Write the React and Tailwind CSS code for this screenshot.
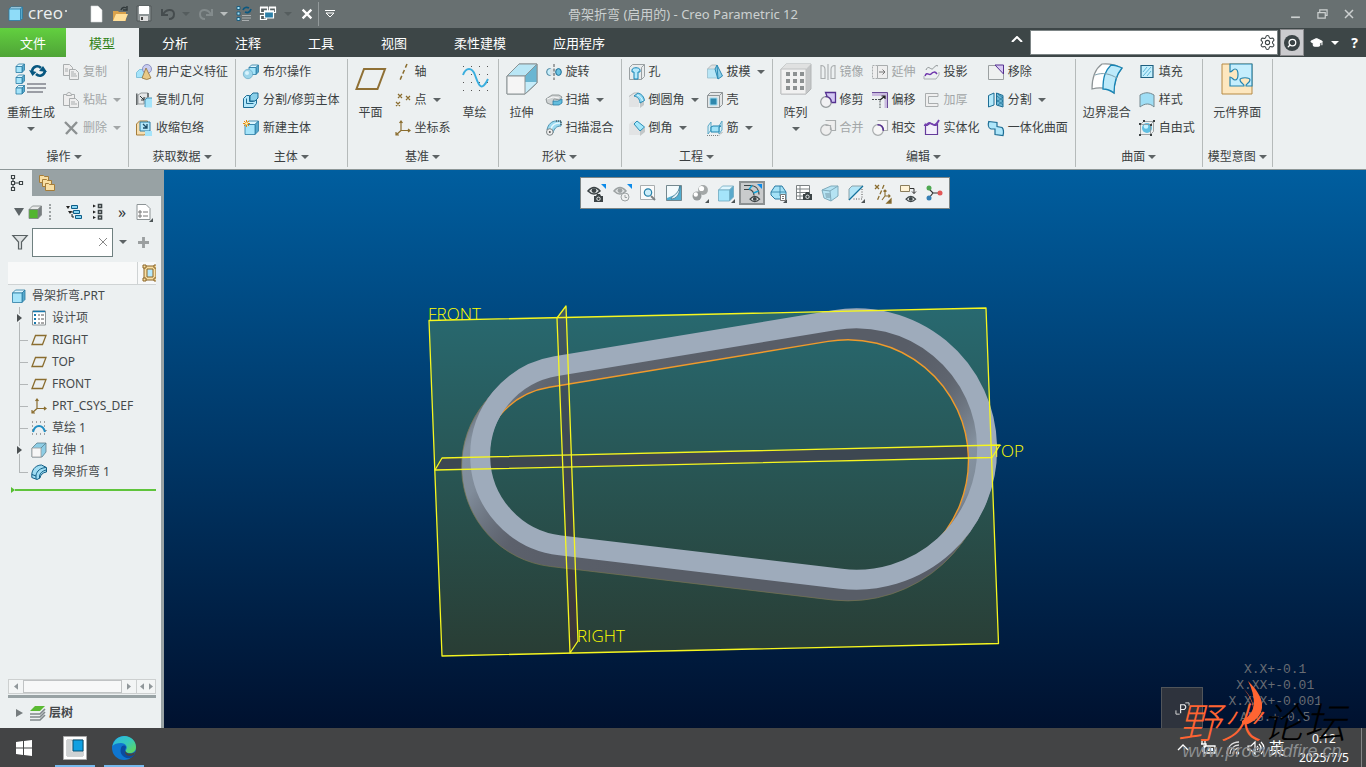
import { Settings, GraduationCap, Search } from 'lucide-react';

const Cube = ({ x = 0, y = 0, s = 11, d = 4, front = '#a5e4fa', top = '#dff6fe', side = '#58a9cc', line = '#2a7ba3' }) => (
  <g stroke={line} strokeWidth="0.8" strokeLinejoin="round">
    <path d={`M${x} ${y + d}l${d} ${-d}h${s}l${-d} ${d}z`} fill={top} />
    <path d={`M${x + s} ${y + d}l${d} ${-d}v${s}l${-d} ${d}z`} fill={side} />
    <path d={`M${x} ${y + d}h${s}v${s}h${-s}z`} fill={front} />
  </g>
);

const Eye = ({ x = 0, y = 0, c = '#3c4446', k = 1 }) => (
  <g transform={`translate(${x} ${y}) scale(${k})`}>
    <path d="M0 4Q6-3 12 4Q6 10 0 4z" fill="#dfe3e4" stroke={c} strokeWidth="1.5" />
    <circle cx="6" cy="3.6" r="2.4" fill={c} />
  </g>
);

const Camera = ({ x = 0, y = 0 }) => (
  <g transform={`translate(${x} ${y})`}>
    <path d="M0 2h2l1-2h3l1 2h2v6H0z" fill="#3c4446" />
    <circle cx="4.5" cy="4.8" r="1.7" fill="none" stroke="#eef2f3" strokeWidth="0.9" />
  </g>
);

const Corner = () => <path d="M17 14v4h-4z" fill="#4d5557" />;
const BlueCorner = () => <path d="M13 -1h5v5z" fill="#0c8bea" />;

// Every drawing lives in a 16 x 16 box unless noted in LARGE
const ICONS = {
  copy: <g fill="#eee" stroke="#a9adae"><path d="M.5 .5h6l3 3v8h-9z" /><path d="M6.500 5.500h6l3 3v7h-9z" /><path d="M2 5h3M2 7h3M8 10h5M8 12h6M8 8h3" /></g>,
  paste: <g fill="#eee" stroke="#a9adae"><path d="M.5 2.500h11v11H.5z" /><path d="M3.500 3.500c0-4 5-4 5 0z" /><path d="M6.500 6.500h6l3 3v6h-9z" /><path d="M8 10h4M8 12h6" /></g>,
  remove: <path d="M2 2l12 12M14 2L3 14" stroke="#8c9192" strokeWidth="2.400" />,
  udf: <g><path d="M.5 8.500l3-3h7v8h-10z" fill="#a5e4fa" stroke="#6fb6d4" strokeWidth=".8" /><circle cx="11" cy="5" r="4.500" fill="#c9cdf0" stroke="#7a80b8" strokeWidth=".8" /><path d="M10 4l5 10q-4 3-9 0z" fill="#e8c987" stroke="#84632b" strokeWidth=".7" /></g>,
  copygeom: <g><path d="M2 12V3l3-2h7v5H8v6z" fill="#e5e7e8" stroke="#969b9d" /><path d="M.8 1.500V13M12 1v4" stroke="#4b5153" strokeWidth="1.300" /><path d="M9 8l2-2h5v9.500H9z" fill="#a5e4fa" /><path d="M9 15V8l2-2h5" stroke="#2a7ba3" strokeWidth=".8" /><path d="M4 4l4 4M8 5v3H5" stroke="#303638" fill="none" /></g>,
  shrink: <g><path d="M.5 4l3-3h8v10l-3 4h-8z" fill="#f6deb0" stroke="#a57d39" /><path d="M4 2h10v9H4z" fill="#b5e8fb" stroke="#2a7ba3" /><path d="M9 11h7v5H9z" fill="#a5e4fa" /><path d="M7 4l4 4M11 4v4H7" stroke="#1c4e69" fill="none" strokeWidth="1.300" /></g>,
  boolean: <g><Cube x={6} y={1} s={7} d={2.500} /><circle cx="5" cy="10" r="4.700" fill="#9dd5ea" stroke="#64a8c4" strokeWidth=".7" /><circle cx="4" cy="9" r="2" fill="#d8f3fc" /></g>,
  splitbody: <g fill="#b5e8fb" stroke="#1d6d94"><path d="M.5 6.500l3-3h3v6h4l3-2v4l-3 4h-10z" /><path d="M7 4l3-3h5v5l-3 3H7z" fill="#8ad0ea" /><path d="M3.500 6.500v5h7" fill="none" /></g>,
  newbody: <g><Cube x={2} y={1} s={10} d={3.500} /><path d="M3.500 0v7M0 3.500h7M1 1l5 5M6 1L1 6" stroke="#f18a00" /><circle cx="3.500" cy="3.500" r="1.300" fill="#fff3b0" /></g>,
  axis: <path d="M12 0L5 16" stroke="#8a6d2f" strokeWidth="1.500" strokeDasharray="4 2.500" />,
  point: <path d="M3 2l4 4M7 2L3 6M11 4l4 4M15 4l-4 4M1 10l4 4M5 10l-4 4" stroke="#8a6d2f" strokeWidth="1.200" />,
  csys: <g stroke="#8a6d2f" fill="none" strokeWidth="1.200"><path d="M6 1v9.500h9M6 10.500L1 15M4.500 3L6 1l1.500 2M13 9l2 1.500L13 12M1 12v3h3" /></g>,
  revolve: <g><ellipse cx="3.500" cy="8" rx="2.800" ry="3.400" fill="#c8eefb" stroke="#437f9b" /><path d="M4 5h8v6H4z" fill="#dbe2e5" /><ellipse cx="12.500" cy="8" rx="2.800" ry="3.400" fill="#6cc3e2" stroke="#1d6d94" /><path d="M8 0v16" stroke="#555" strokeDasharray="3 1.500" /></g>,
  sweep: <g stroke="#7d8587" strokeWidth=".8"><path d="M0 7l6-4h7l3 2-2 3-6-1-1 2 2 2-3 2-5-2z" fill="#cfd3d4" /><path d="M1 7l6-2 6 1" fill="none" stroke="#fff" /><path d="M7 9h5l4-2v4l-3 2H7z" fill="#63bddd" stroke="#2a7ba3" /></g>,
  sweptblend: <g><path d="M1 10C2 4 6 1 10 1h5v5c-5 0-7 3-8 7z" fill="#9bdaf0" stroke="#4c92b0" /><path d="M5 9C6 5 9 3 14 3" stroke="#e8f8fe" strokeWidth="1.500" fill="none" /><circle cx="3.800" cy="12" r="3.300" fill="#eee" stroke="#7d8587" /><circle cx="3.800" cy="12" r="1" fill="#555" /><path d="M10 1h5v5" stroke="#333" fill="none" strokeDasharray="1 1" /></g>,
  hole: <g><path d="M.5 3.500l3-3h12v12l-3 3H.5z" fill="#e9eced" stroke="#9aa0a2" /><path d="M12.500 3.500v12M12.500 3.500l3-3" stroke="#9aa0a2" /><path d="M3 6c0-3 8-3 8 0v2H9v7H5V8H3z" fill="#b5e8fb" stroke="#1383b5" /></g>,
  round: <g><path d="M0 5L5 1l5 3v11H0z" fill="#e1e3e4" /><path d="M11 10l4-2v5l-4 3z" fill="#c3c7c8" /><path d="M0 4.500L5 1h4" stroke="#b3b8ba" /><path d="M5 4l4-3c4 1 6 4 6.500 7.500L11 11C10.500 7 9 5 5 4z" fill="#8ed8f2" stroke="#1d82ae" strokeWidth=".9" /><path d="M8 3c3 1 5 3 5.500 6" stroke="#e0f7ff" fill="none" /></g>,
  chamfer: <g><path d="M0 4L4 1h4l3 9v5H0z" fill="#e1e3e4" /><path d="M11 11l5-4v5l-5 4z" fill="#c3c7c8" /><path d="M5 4l3-3 7.500 6L11 11z" fill="#a5e8fb" stroke="#1d82ae" strokeWidth=".9" /></g>,
  draft: <g><path d="M.5 5l4-4h5v4" fill="#dfe3e4" stroke="#a0a6a8" strokeWidth=".7" /><path d="M.5 5h8l2 9H.5z" fill="#b9e6f6" stroke="#8fb9c8" strokeWidth=".7" /><path d="M8 5l2-4 5.500 11-4.500 3z" fill="#8ccfe8" stroke="#2c8bb5" /><path d="M10 1l1 14" stroke="#2c8bb5" /></g>,
  shell: <g><path d="M.5 3.500l3-3h12v12l-3 3H.5z" fill="#e3e6e7" stroke="#909698" /><path d="M.5 3.500h12v12M12.500 3.500l3-3" stroke="#909698" fill="none" /><path d="M3 6h7v7H3z" fill="#2f88ad" stroke="#9edaf0" /></g>,
  rib: <g><path d="M1 6l3-4v8l-3 4zM12 6l3-5v9l-3 4z" fill="#d7eef7" stroke="#5fa9c6" /><path d="M4 7l2-1h8l-2 1v5H4z" fill="#9fe2f8" stroke="#1d82ae" /><path d="M0 15.500h12l4-4" stroke="#7b8183" strokeDasharray="1 1" fill="none" /></g>,
  mirror: <g fill="none" stroke="#a9adae" strokeWidth="1.100"><path d="M1 1.500c3 0 4 2 4 4v9H1zM15 1.500c-3 0-4 2-4 4v9h4z" /><path d="M8 0v16" /></g>,
  extend: <g fill="#eee" stroke="#a9adae"><path d="M.5 1.500h5v13h-5z" strokeDasharray="2 1" /><path d="M5.500 1.500h10v13h-10z" /><path d="M7 8h6M10.500 5.500L13 8l-2.500 2.500" stroke="#777" /></g>,
  project: <g fill="none" stroke="#8b9193"><path d="M2 6c2-5 4-1 6-1s3-5 6-3" /><path d="M0 12v3h12l3-4v-3" stroke="#aab0b2" /><path d="M1 12c2-5 4 0 6-2s4-3 6 0" stroke="#6f36ac" strokeWidth="1.500" /></g>,
  erase: <g><path d="M.5 1.500h15v14H.5z" fill="#eef0f0" stroke="#9ba0a1" /><path d="M7 1h8.500v9z" fill="#d7c9f3" stroke="#543090" /></g>,
  trim: <g><path d="M5.500 .5h10v10h-6z" fill="#d2c6f3" stroke="#543090" strokeWidth="1.300" /><circle cx="6" cy="10" r="5.300" fill="#f1f1f3" stroke="#969b9d" strokeWidth="1.200" /><path d="M11.300 10.500a5.300 5.300 0 0 0-5.800-5.800" stroke="#543090" fill="none" strokeWidth="1.300" /></g>,
  offset: <g><path d="M0 2.500h14V16" fill="none" stroke="#c9badf" strokeWidth="3" /><path d="M0 .5h15.500V16" fill="none" stroke="#6a4c98" /><path d="M0 7.500h8V16" fill="none" stroke="#4b5153" strokeDasharray="2 1" /><path d="M8 8l5-4M9.500 4H13v3" stroke="#222" fill="none" strokeWidth="1.200" /></g>,
  thicken: <path d="M14 1.500H1.500v13H14v-3H4.500v-7H14z" fill="#efefef" stroke="#a9adae" />,
  split: <g stroke="#1d6d94"><path d="M.5 3.500L6 1v12l-5.500 2z" fill="#b5eafc" /><path d="M8.500 1L15 3.500V15l-6.500-2z" fill="#6fb9d6" /><path d="M9 4l6 5M9 8l6 5M10 2l5 4M15 5L9 10M15 9l-5 4" strokeWidth=".7" /></g>,
  merge: <g fill="#eee" stroke="#a9adae" strokeWidth="1.200"><path d="M5.500 .5h10v10h-5" /><circle cx="6" cy="10" r="5.300" /><path d="M5.500 5.500h5V10" /></g>,
  intersect: <g fill="#f6f6f6" stroke="#a9adae" strokeWidth="1.200"><path d="M5.500 .5h10v10h-6" /><circle cx="6" cy="10" r="5.300" /><path d="M5.500 4.700c4 0 5.800 2 5.800 6" stroke="#543090" fill="none" strokeWidth="1.600" /></g>,
  solidify: <g><path d="M1.500 14.500v-10c2 3 3-2 6-1s4 4 6 0v11z" fill="#f2eefb" stroke="#643b9b" strokeWidth="1.200" /><path d="M0 5c3 1 4-3 6-2s5 5 9-3" fill="none" stroke="#7440b0" strokeWidth="1.800" /></g>,
  unify: <path d="M.8 1.500l8.200 1v4l5 1c2 2 2 4 1 8l-8-1V9H3C0 8 0 4 .8 1.500z" fill="#aee6fa" stroke="#1d6d94" strokeWidth="1.200" />,
  fill: <g><path d="M2 1.500h12v12H2z" fill="#c4effd" stroke="#1d5f80" strokeWidth="1.200" /><path d="M4 8l4-5M4 12l8-9M8 12l4-5" stroke="#5eb6d8" /></g>,
  style: <path d="M1 3c5-3 9-3 14 0v12c-4-4-9-4-14 0z" fill="#9fdef5" stroke="#75888f" />,
  freestyle: <g><circle cx="8" cy="8" r="5" fill="#5fbfe2" /><circle cx="7" cy="6.500" r="2.300" fill="#c8f2ff" /><path d="M1.500 4.500l3-3h10v10l-3 3h-10zM1.500 4.500h10v10M11.500 4.500l3-3" fill="none" stroke="#8b9193" strokeWidth=".8" /><path d="M0 3h2v2H0zM11 4h2v2h-2zM0 14h2v2H0zM14 0h2v2h-2zM4 0h2v2H4zM11 14h2v2h-2z" fill="#3b4143" /></g>,

  newfile: <path d="M3 0h7l4 4v12H3z" fill="#fff" stroke="#d5d8d8" strokeWidth=".6" />,
  open: <g><path d="M1 5h5l1 1h7v9H1z" fill="#d9a14b" /><path d="M4 8h12l-3 7H1z" fill="#ffdf9a" /><path d="M9 4c1-3 4-3 5-2M15 0v4h-4" stroke="#30383a" fill="none" strokeWidth="1.400" /></g>,
  save: <g><path d="M1 0h14v15H1z" fill="#8e9596" stroke="#505759" /><path d="M3 0h10v8H3z" fill="#fff" /><path d="M4 10h8v5H4z" fill="#ddd" /><path d="M5 11h2v3H5z" fill="#444" /></g>,
  undo: <path d="M2 3v6h6M3 9c2-6 11-7 11-1 0 4-3 5-5 5" fill="none" stroke="#454c4e" strokeWidth="2" />,
  redo: <path d="M14 3v6H8M13 9C11 3 2 2 2 8c0 4 3 5 5 5" fill="none" stroke="#838b8c" strokeWidth="2" />,
  regensmall: <g><path d="M1 .5h3v3H1zM1 6h3v3H1zM1 11.500h3v3H1z" fill="#a5e4fa" stroke="#1d5f80" /><path d="M6 9.500h9M6 12h9M6 14.500h7" stroke="#a9aeaf" /><path d="M7 4c1-3 4-3 6-2M15 3c-1 4-4 4-6 3" stroke="#0b5880" fill="none" strokeWidth="1.700" /></g>,
  windows: <g fill="#566062" stroke="#fff" strokeWidth="1.200"><path d="M.5 1.500h7v5h-7zM9.500 1.500h6v5h-6zM.5 9.500h6v4h-6z" /><path d="M0 1.500h8M9 1.500h7" strokeWidth="2" /><path d="M4.500 5h9v7h-9z" fill="#2d7fa6" /><path d="M4 5.500h10" strokeWidth="2" /></g>,
  close: <path d="M3 3l10 10M13 3L3 13" stroke="#fff" strokeWidth="2.600" />,

  modeltree: <g fill="#fff" stroke="#3c4446" strokeWidth="1.200"><path d="M4 8h8M4 3v11" /><path d="M2.500 .5h3v3h-3zM2.500 6.500h3v3h-3zM2.500 12.500h3v3h-3zM10.500 6.500h3v3h-3z" /></g>,
  folders: <g fill="#f8dfa4" stroke="#a57d39"><path d="M.5 .5h4l1 1h4v6h-9z" /><path d="M3.500 4.500h4l1 1h4v6h-9z" /><path d="M6.500 8.500h3l1 1h5v6h-9z" /></g>,
  greencube: <Cube x={1} y={2} s={9} d={3.500} front="#52b52f" top="#e7e9e9" side="#767d7f" line="#7d8384" />,
  treelevels: <g fill="#8ad6f3" stroke="#0d5d88"><path d="M5.500 1.500h6v3h-6zM7.500 6.500h6v3h-6zM9.500 11.500h6v3h-6z" /><path d="M4 8h3M6 10v3h2" stroke="#222" /><path d="M0 2h4L2 5zM2 7h4L4 10z" fill="#222" stroke="none" /></g>,
  treelist: <g><path d="M6.500 .5h3v3h-3zM6.500 6.500h3v3h-3zM6.500 12h3v3h-3z" fill="none" stroke="#3c4446" strokeWidth="1.600" /><path d="M1 .5l3 1.500L1 3.500zM1 6.500L4 8 1 9.500zM1 12l3 1.500L1 15z" fill="#222" /></g>,
  doclist: <g><path d="M1 .5h9l4 4v11H1z" fill="#fff" stroke="#8d9496" /><path d="M3 7h2v2H3zM3 11h2v2H3z" fill="none" stroke="#777" /><path d="M7 8h5M7 12h5" stroke="#777" /><Corner /></g>,
  funnel: <path d="M.8 1.500h14.400L9.500 8v7h-3V8z" fill="#dde1e2" stroke="#596163" strokeWidth="1.200" />,
  frame: <g fill="#f8dfa4" stroke="#8a6526"><path d="M2 1h12v14H2z" /><path d="M5 4h6v8H5z" fill="#b5e8fb" /><path d="M1 0h3v3H1zM12 0h3v3h-3zM1 13h3v3H1zM12 13h3v3h-3z" /></g>,
  part: <Cube x={1.500} y={2} s={9.500} d={3} />,
  design: <g><path d="M1.500 1h13v14h-13z" fill="#fff" stroke="#8d9496" /><path d="M2 1.500h12" stroke="#1778ac" strokeWidth="1.500" /><path d="M3 4h2v2H3zM3 8h2v2H3zM3 12h2v2H3z" fill="#1778ac" /><path d="M7 5h2M10 5h3M7 9h2M10 9h3M7 13h2M10 13h3" stroke="#555" /></g>,
  plane: <path d="M4.500 3.500h10.500L11.500 12.500H1z" fill="none" stroke="#8a6d2f" strokeWidth="1.300" />,
  sketch: <g><path d="M2 12C4 4 12 4 14 12" fill="none" stroke="#1f8ec4" strokeWidth="2" /><path d="M1 2h14M1 6h2M13 6h2M1 10h1M15 10v1M1 14h14" stroke="#555" strokeDasharray="1 3" fill="none" /></g>,
  extrudesmall: <g strokeWidth=".8"><path d="M1 6l5-5h9v9l-4 5H1z" fill="#8dcde5" stroke="#5d7f8d" /><path d="M1 6h9v9H1z" fill="#f6f6f6" stroke="#999" /><path d="M10 6l5-5" stroke="#5d7f8d" /></g>,
  bend: <g fill="#9fdcf2" stroke="#135f86" strokeWidth="1"><path d="M.8 13.500V10C1.500 4 6 1 10.500 1l5 2.500V8c-4 .5-6 3-6.500 6l-3 1.500z" /><path d="M5 15v-4C6 7 9 4 15 3.500M1 10.500l4 1.500M8.500 14v-2c.5-3 3-5 6.500-6" fill="none" /></g>,
  layers: <g><path d="M6 1h10l-5 5H1z" fill="#5aba33" /><path d="M1 9h10l5-5M1 12h10l5-5M1 15h10l5-5" stroke="#80888a" strokeWidth="1.700" fill="none" /></g>,

  eyecam: <g><Eye y={2} /><Camera x={6} y={9} /><BlueCorner /></g>,
  eyeclock: <g><Eye y={2} c="#9ca2a3" /><circle cx="11" cy="12" r="4" fill="#eef0f0" stroke="#9ca2a3" /><path d="M11 10v2.500h2" stroke="#9ca2a3" fill="none" /><BlueCorner /></g>,
  refit: <g><path d="M.5 .5h14v14H.5z" fill="#fbfbfb" stroke="#a9aeb0" /><circle cx="8" cy="7.500" r="3.700" fill="#cdeefa" stroke="#2680a8" strokeWidth="1.200" /><path d="M11 11l4 4" stroke="#7b8183" strokeWidth="2" /></g>,
  repaint: <g><path d="M.5 .5h15v15H.5z" fill="#51add0" stroke="#74888f" /><path d="M1 1h12c0 5-3 9-7 10l-5 2z" fill="#f3fafc" /><path d="M14 1C13 7 9 10 6 12l-1 2c5 0 9-4 9-13z" fill="#dff1f8" stroke="#3d6f84" strokeWidth=".7" /></g>,
  shading: <g><circle cx="11" cy="5" r="4.900" fill="#a4a8a8" /><circle cx="9.500" cy="3.500" r="2.600" fill="#fff" /><circle cx="5" cy="11" r="4.500" fill="#969b9c" /><circle cx="3.800" cy="9.500" r="2.200" fill="#fff" /><Corner /></g>,
  viewcube: <g><Cube x={.5} y={1} s={11} d={4} line="#6fa9c0" /><Corner /></g>,
  bendview: <g><path d="M0 .5h6c6 0 9 4 9 9M0 4.500h5c3 0 5 3 5 6" fill="none" stroke="#3c4446" strokeWidth="1.200" /><path d="M8 .5L5 4.500M14.500 6l-5 2" stroke="#12a5d8" strokeWidth="1.400" /><Eye x={6} y={11} k={0.8} /><BlueCorner /></g>,
  saved: <g><path d="M1 7l4-6h7l4 6v7H5l-4-4z" fill="#a4e1f6" stroke="#2a7ba3" /><path d="M1 7h15M10 1v10" stroke="#2a7ba3" fill="none" strokeWidth=".8" /><path d="M10.500 9.500h5v6h-5z" fill="#fff" stroke="#777" /><path d="M12 11.500h2M12 13.500h2" stroke="#777" /><Corner /></g>,
  tablecam: <g><path d="M.5 .5h13v14H.5zM.5 4h13M.5 7.500h13M.5 11h13M4 .5v14" fill="#fff" stroke="#7b8183" /><Camera x={7} y={7} /></g>,
  perspective: <g fill="#b5e3f3" stroke="#7faabb"><path d="M0 5L9 1h7v10l-7 5-7-3z" /><path d="M0 5l8 1 8-5M8 6l1 10" fill="none" /><path d="M3 8h5v5H4z" fill="#93bccc" stroke="none" /></g>,
  section: <g><path d="M1 4l3-3h11L1 15z" fill="#b2e5f7" stroke="#8aa2ab" /><path d="M14 4v10H4" fill="none" stroke="#555" strokeDasharray="1 1.500" /><path d="M1 15L15 1" stroke="#12719d" strokeWidth="1.300" /><Corner /></g>,
  datums: <g stroke="#8a6d2f" strokeWidth="1.300" fill="none"><path d="M1 0l4 4M5 0L1 4" /><path d="M10 0L3 16" strokeDasharray="4 2" /><path d="M11 5v6h5M11 11l-3 4M9.500 6.500L11 5l1.500 1.500M14.500 9.500L16 11l-1.500 1.500" strokeWidth="1.100" /><Corner /></g>,
  annot: <g><path d="M.5 .5h9v6h-9z" fill="#fff3d6" stroke="#8a7d5c" /><path d="M10 3.500h4v5M12 6.500l2 2 2-2" stroke="#333" fill="none" /><Eye x={6} y={11} k={0.8} /></g>,
  spin: <g><path d="M2 3l5 5h7M7 8l-4 5" stroke="#333" strokeWidth="1.200" fill="none" /><circle cx="3" cy="3" r="2.500" fill="#4ea852" /><circle cx="14" cy="8" r="2.500" fill="#e25757" /><circle cx="3" cy="13" r="2.500" fill="#347fb5" /></g>,
};

// 32 x 32 drawings used by the tall ribbon buttons
const LARGE = {
  regen: <g><Cube x={1} y={1} s={6} d={2.500} /><Cube x={1} y={12} s={6} d={2.500} /><Cube x={1} y={22.500} s={6} d={2.500} /><path d="M12 21h19M12 25h19M12 29h16" stroke="#9b9ea5" strokeWidth="2" /><path d="M17 8c1-5 6-6 9-3M30 8c-1 5-6 6-9 3" fill="none" stroke="#075780" strokeWidth="2.600" /><path d="M14 7l3.500 6 4-4zM32 9l-4-6-4 5z" fill="#075780" /></g>,
  plane: <path d="M9 6h21L22.500 26H1.500z" fill="none" stroke="#8f7035" strokeWidth="2" />,
  sketch: <g><path d="M4 3.500h28M4 11.500h28M4 19.500h28M4 27.500h28" stroke="#555" strokeDasharray="1 7" /><path d="M4 12C7 4 13 4 16 12s6 19 13 4" fill="none" stroke="#3aaede" strokeWidth="1.900" /></g>,
  extrude: <g stroke="#8b9395"><path d="M1 13L13 1h18v19L19 31H1z" fill="#8bd0e8" /><path d="M13 1v17h17L19 31V13z" fill="#5faecb" stroke="none" /><path d="M1 13L13 1h18L19 13z" fill="#b9e6f5" /><path d="M19 31V19h12z" fill="#c6ecf9" stroke="none" /><path d="M19 13L31 1v18H19z" fill="#6ab6d2" stroke="none" /><path d="M19 13L31 1M19 31l12-11V1" fill="none" /><path d="M1 13h18v18H1z" fill="#f5f5f5" /></g>,
  pattern: <g><path d="M1 6l5-5h25v25l-5 5H1z" fill="#c4c6c7" stroke="#b3b6b7" /><path d="M1 6l5-5h25l-5 5z" fill="#e0e1e1" /><path d="M1 6h25v25H1z" fill="#f1f1f1" stroke="#c0c2c3" /><path d="M6 11h4M13 11h4M20 11h4M6 18h4M13 18h4M20 18h4M6 25h4M13 25h4M20 25h4" stroke="#8d9192" strokeWidth="4" /></g>,
  boundary: <g><path d="M1 26C1 14 4 6 11 1c8-1 14 1 20 4-5 6-8 13-8 25-6-5-14-6-22-4z" fill="#fff" stroke="#8d9496" strokeWidth="1.200" /><path d="M20 2c6 0 8 2 11 3-5 6-8 13-8 25-4-3-7-4-11-4 0-12 2-18 8-24z" fill="#bdeafa" stroke="#1685b6" strokeWidth="1.300" /><path d="M4 12c8-3 15-1 22 3" fill="none" stroke="#7da0ad" /></g>,
  component: <g><path d="M1 1h30v30H1z" fill="#fde7bf" stroke="#b68a44" /><path d="M9 1h22v22h-6c-1-2 4-3 4-6 0-3-10-3-10 0 0 3 5 4 4 6H9V14c2 0 3 3 5 3 4 0 4-11 0-11-2 0-3 3-5 3z" fill="#c5eefd" stroke="#2584af" strokeWidth="1.200" /></g>,
};

const Icon = ({ name, className = 'size-4' }) => (
  <svg viewBox="0 0 16 16" className={`${className} shrink-0 overflow-visible`} fill="none" aria-hidden="true">{ICONS[name]}</svg>
);

const LargeIcon = ({ name }) => (
  <svg viewBox="0 0 32 32" className="size-8 shrink-0" fill="none" aria-hidden="true">{LARGE[name]}</svg>
);

const Caret = ({ className = 'text-[#5d6365]' }) => (
  <svg viewBox="0 0 8 4" className={`h-1 w-2 shrink-0 ${className}`} aria-hidden="true"><path d="M0 0h8L4 4z" fill="currentColor" /></svg>
);

const QUICK_LEFT = ['newfile', 'open', 'save', 'undo'];
const TABS = ['模型', '分析', '注释', '工具', '视图', '柔性建模', '应用程序'];

// A column is either one tall button or up to three rows: [icon, label, flags] (c = caret, d = disabled)
const GROUPS = [
  { title: '操作', cols: [{ big: 'regen', label: '重新生成', caret: true }, [['copy', '复制', 'd'], ['paste', '粘贴', 'dc'], ['remove', '删除', 'dc']]] },
  { title: '获取数据', cols: [[['udf', '用户定义特征'], ['copygeom', '复制几何'], ['shrink', '收缩包络']]] },
  { title: '主体', cols: [[['boolean', '布尔操作'], ['splitbody', '分割/修剪主体'], ['newbody', '新建主体']]] },
  { title: '基准', cols: [{ big: 'plane', label: '平面' }, [['axis', '轴'], ['point', '点', 'c'], ['csys', '坐标系']], { big: 'sketch', label: '草绘' }] },
  { title: '形状', cols: [{ big: 'extrude', label: '拉伸' }, [['revolve', '旋转'], ['sweep', '扫描', 'c'], ['sweptblend', '扫描混合']]] },
  { title: '工程', cols: [[['hole', '孔'], ['round', '倒圆角', 'c'], ['chamfer', '倒角', 'c']], [['draft', '拔模', 'c'], ['shell', '壳'], ['rib', '筋', 'c']]] },
  { title: '编辑', cols: [
    { big: 'pattern', label: '阵列', caret: true },
    [['mirror', '镜像', 'd'], ['trim', '修剪'], ['merge', '合并', 'd']],
    [['extend', '延伸', 'd'], ['offset', '偏移'], ['intersect', '相交']],
    [['project', '投影'], ['thicken', '加厚', 'd'], ['solidify', '实体化']],
    [['erase', '移除'], ['split', '分割', 'c'], ['unify', '一体化曲面']],
  ] },
  { title: '曲面', cols: [{ big: 'boundary', label: '边界混合' }, [['fill', '填充'], ['style', '样式'], ['freestyle', '自由式']]] },
  { title: '模型意图', cols: [{ big: 'component', label: '元件界面' }] },
];

const TREE = [
  { icon: 'design', label: '设计项', open: true },
  { icon: 'plane', label: 'RIGHT' },
  { icon: 'plane', label: 'TOP' },
  { icon: 'plane', label: 'FRONT' },
  { icon: 'csys', label: 'PRT_CSYS_DEF' },
  { icon: 'sketch', label: '草绘 1' },
  { icon: 'extrudesmall', label: '拉伸 1', open: true },
  { icon: 'bend', label: '骨架折弯 1', last: true },
];

const VIEW_TOOLS = ['eyecam', 'eyeclock', 'refit', 'repaint', 'shading', 'viewcube', 'bendview', 'saved', 'tablecam', 'perspective', 'section', 'datums', 'annot', 'spin'];

function TitleBar() {
  return (
    <header className="grid h-7 shrink-0 grid-cols-[1fr_auto_1fr] items-center bg-[#687071] text-[#ccd0d0]">
      <div className="flex items-center">
        <svg viewBox="0 0 16 16" className="ml-2 size-4" aria-hidden="true"><Cube x={1} y={1} s={11.500} d={2} front="#8fdcf8" /></svg>
        <span className="ml-1 flex w-[46px] items-center font-['Open_Sans',sans-serif] text-[17px] leading-5 font-medium text-[#eef1f1]">
          <span className="-mt-0.5">creo</span>
          <span className="mb-1.5 ml-0.5 size-0.5 rounded-full bg-[#eef1f1]" />
        </span>
        <div className="ml-3.5 flex items-center gap-2">
          {QUICK_LEFT.map((n) => <button key={n} aria-label={n}><Icon name={n} /></button>)}
        </div>
        <Caret className="ml-1.5 text-[#555d5e]" />
        <button aria-label="redo" className="ml-2"><Icon name="redo" /></button>
        <Caret className="ml-1.5 text-[#b9bebe]" />
        <button aria-label="regenerate" className="ml-2"><Icon name="regensmall" /></button>
        <button aria-label="windows" className="ml-2"><Icon name="windows" /></button>
        <Caret className="ml-2 text-[#555d5e]" />
        <button aria-label="close window" className="ml-2"><Icon name="close" className="size-[14px]" /></button>
        <span className="ml-1 h-6 w-px bg-[#92999a]" />
        <svg viewBox="0 0 10 8" className="ml-1.5 h-2 w-2.5" aria-hidden="true"><path d="M0 .5h10" stroke="#fff" /><path d="M1 3h8L5 7z" fill="none" stroke="#fff" /></svg>
      </div>
      <h1 className="text-[13px] leading-5">骨架折弯 (启用的) - Creo Parametric 12</h1>
      <div className="flex items-center justify-end gap-4 pr-3">
        <button aria-label="最小化"><svg viewBox="0 0 10 10" className="size-[11px]"><path d="M1 7.500h8" stroke="#ccd0d0" strokeWidth="1.500" /></svg></button>
        <button aria-label="还原"><svg viewBox="0 0 12 12" className="size-[11px]"><path d="M3 4V1h8v6H9M1 4h8v6H1z" fill="none" stroke="#ccd0d0" strokeWidth="1.300" /></svg></button>
        <button aria-label="关闭"><svg viewBox="0 0 10 10" className="size-[10px]"><path d="M1 1l8 8M9 1L1 9" stroke="#ccd0d0" strokeWidth="1.500" /></svg></button>
      </div>
    </header>
  );
}

function TabBar() {
  return (
    <nav className="flex h-[29px] shrink-0 items-stretch bg-[#3d4647] text-[13px] leading-5 text-white">
      <button className="bg-gradient-to-b from-[#62d03f] to-[#4fa437] px-5">文件</button>
      {TABS.map((t, i) => (
        <button key={t} className={i === 0 ? 'bg-[#ecf0f1] pr-6 pl-[23px] text-[#34851c]' : 'pr-6 pl-[23px]'}>{t}</button>
      ))}
      <div className="ml-auto flex items-center">
        <svg viewBox="0 0 12 6" className="mb-2 h-1.5 w-3" aria-hidden="true"><path d="M1 6l5-5 5 5" fill="none" stroke="#fff" strokeWidth="2" /></svg>
        <div className="ml-[7px] flex h-[25px] w-[248px] items-center border border-[#7d8586] bg-white">
          <input aria-label="搜索命令" className="h-full min-w-0 flex-1 px-1 text-black outline-none" />
          <Settings className="mr-px size-[17px] text-[#3c4446]" strokeWidth={1.500} />
        </div>
        <button aria-label="搜索" className="ml-0.5 flex h-[27px] w-6 items-center justify-center border border-[#8d8d90] bg-[#cbcbce]">
          <span className="flex size-4 items-center justify-center rounded-full bg-[#3b4446]"><Search className="size-2.5 -scale-x-100 text-white" strokeWidth={3} /></span>
        </button>
        <button aria-label="学习" className="ml-1.5"><GraduationCap className="size-[13px] text-white" fill="#fff" /></button>
        <Caret className="ml-2 text-white" />
        <button aria-label="帮助" className="mr-2 ml-3 text-sm font-bold">?</button>
      </div>
    </nav>
  );
}

function RibbonColumn({ col }) {
  if (col.big) {
    return (
      <button className="flex min-w-8 flex-col items-center pt-[5px]">
        <LargeIcon name={col.big} />
        <span className="mt-2.5 leading-4">{col.label}</span>
        {col.caret && <Caret className="mt-1.5 text-[#5d6365]" />}
      </button>
    );
  }
  return (
    <div className="flex flex-col">
      {col.map(([icon, label, flags = '']) => {
        const disabled = flags.includes('d');
        return (
          <button key={label} disabled={disabled} className={`flex h-7 items-center ${disabled ? 'text-[#a2a6a7]' : ''}`}>
            <Icon name={icon} />
            <span className="ml-1 leading-4">{label}</span>
            {flags.includes('c') && <Caret className={disabled ? 'ml-1.5 text-[#a2a6a7]' : 'ml-1.5 text-[#5d6365]'} />}
          </button>
        );
      })}
    </div>
  );
}

function Ribbon() {
  return (
    <section className="flex h-[113px] shrink-0 border-b border-[#8d9798] bg-[#ecf0f1] py-0.5 text-xs text-[#3b3f41]">
      {GROUPS.map((g) => (
        <div key={g.title} className="flex flex-col border-r border-[#b5baba]">
          <div className="-mt-px flex h-[88px] justify-center gap-2 px-[7px]">
            {g.cols.map((c, i) => <RibbonColumn key={i} col={c} />)}
          </div>
          <button className="flex flex-1 items-center justify-center gap-[3px] px-[5px] leading-4">{g.title}<Caret /></button>
        </div>
      ))}
    </section>
  );
}

function ModelTree() {
  return (
    <aside className="flex w-[164px] shrink-0 flex-col border-r-[3px] border-[#98a2a4] bg-[#ecf0f1] text-xs text-[#45494b]">
      <div className="flex h-[26px] bg-[#98a2a4]">
        <button aria-label="模型树" className="flex w-8 items-center justify-center bg-[#ecf0f1] pl-0.5"><Icon name="modeltree" /></button>
        <button aria-label="文件夹" className="ml-[7px]"><Icon name="folders" /></button>
      </div>
      <div className="flex h-8 items-center pl-3.5">
        <svg viewBox="0 0 10 8" className="h-2 w-2.5" aria-hidden="true"><path d="M0 0h10L5 8z" fill="#5d6467" /></svg>
        <span className="ml-1"><Icon name="greencube" /></span>
        <span className="ml-[5px] h-4 border-l-2 border-dotted border-[#9da3a4]" />
        <span className="ml-[15px]"><Icon name="treelevels" /></span>
        <span className="ml-2.5"><Icon name="treelist" /></span>
        <button className="ml-2.5 text-base leading-4 text-[#33393b]">»</button>
        <span className="ml-2.5"><Icon name="doclist" /></span>
      </div>
      <div className="flex h-7 items-center pl-3">
        <Icon name="funnel" />
        <div className="ml-1 flex h-[29px] w-[81px] items-center border border-[#6f8080] bg-white">
          <input aria-label="过滤" className="h-full w-0 flex-1 px-1 outline-none" />
          <svg viewBox="0 0 8 8" className="mr-[5px] size-2" aria-hidden="true"><path d="M0 0l8 8M8 0L0 8" stroke="#888" /></svg>
        </div>
        <Caret className="ml-1.5 text-[#5d6365]" />
        <svg viewBox="0 0 10 10" className="ml-[11px] size-[11px]" aria-hidden="true"><path d="M5 0v10M0 5h10" stroke="#9b9fa0" strokeWidth="2.600" /></svg>
      </div>
      <div className="mt-1.5 mr-[5px] ml-2 flex h-[23px] items-center justify-end overflow-hidden border-b border-[#cfd3d4] bg-[#f8f9f9]">
        <span className="h-full w-px bg-[#cfd3d4]" />
        <Icon name="frame" className="-mr-0.5 ml-1 size-4" />
      </div>
      <ul className="leading-4">
        <li className="flex h-[22px] items-center gap-[5px] pl-[11px]"><Icon name="part" />骨架折弯.PRT</li>
        {TREE.map((n) => (
          <li key={n.label} className="relative flex h-[22px] items-center pl-[31px]">
            <span className={`absolute top-0 left-[19px] w-px bg-[#b3b7b8] ${n.last ? 'h-[11px]' : 'h-full'}`} />
            {n.open
              ? <svg viewBox="0 0 5 8" className="absolute left-[17px] h-2 w-[5px] bg-[#ecf0f1]"><path d="M0 0l5 4-5 4z" fill="#4b5052" /></svg>
              : <span className="absolute top-[11px] left-[19px] h-px w-[9px] bg-[#b3b7b8]" />}
            <Icon name={n.icon} />
            <span className="ml-[5px] whitespace-nowrap">{n.label}</span>
          </li>
        ))}
      </ul>
      <div className="mt-1 mr-[5px] ml-[11px] flex items-center">
        <svg viewBox="0 0 4 6" className="h-1.5 w-1" aria-hidden="true"><path d="M0 0l4 3-4 3z" fill="#55bd31" /></svg>
        <span className="h-0.5 flex-1 bg-[#5fc43c]" />
      </div>
      <div className="mt-auto mr-[5px] ml-2 border-b-[3px] border-[#98a2a4] pb-px">
        <div className="flex h-[15px] border border-[#cdd0d0] bg-[#f3f5f5] text-[#90979a]">
          <ScrollArrow left />
          <span className="flex-1 border border-[#c0c3c4] bg-[#f7f8f8]" />
          <ScrollArrow />
          <span className="flex border-l border-[#cdd0d0]"><ScrollArrow left small /><ScrollArrow small /></span>
        </div>
      </div>
      <button className="flex h-[30px] items-center pl-4 leading-4 font-bold">
        <svg viewBox="0 0 7 8" className="h-2 w-[7px]" aria-hidden="true"><path d="M0 0l7 4-7 4z" fill="#767c7e" /></svg>
        <span className="mr-1 ml-1.5"><Icon name="layers" /></span>
        层树
      </button>
    </aside>
  );
}

const ScrollArrow = ({ left, small }) => (
  <button aria-label={left ? '向左' : '向右'} className={`flex items-center justify-center ${small ? 'w-[9px]' : 'w-3.5'}`}>
    <svg viewBox="0 0 5 8" className="h-[7px] w-1"><path d={left ? 'M5 0v8L0 4z' : 'M0 0v8l5-4z'} fill="currentColor" /></svg>
  </button>
);

const SPINE = 'M556 366.200L834.900 320.100A130.700 130.700 0 1 1 841 578.800L560.200 545.400A90.500 90.500 0 0 1 556 366.200z';
const INNER = 'M557.800 376L836.600 330.200A120.500 120.500 0 1 1 842.200 568.700L561.400 535.500A80.500 80.500 0 0 1 557.800 376z';
const OUTER = 'M554.300 356.300L833.300 310.200A140.700 140.700 0 1 1 841 588.800L559 555.300A100.500 100.500 0 0 1 554.300 356.300z';
const STEPS = [12, 11, 10, 9, 8, 7, 6, 5, 4, 3, 2, 1];

function Model() {
  return (
    <svg viewBox="164 170 1202 558" className="block h-full w-full" role="img" aria-label="骨架折弯">
      <defs>
        <linearGradient id="front" x1="0" y1="308" x2="0" y2="656" gradientUnits="userSpaceOnUse">
          <stop offset="0" stopColor="#286970" /><stop offset=".5" stopColor="#285452" /><stop offset="1" stopColor="#293d34" />
        </linearGradient>
        <linearGradient id="strip" x1="0" y1="308" x2="0" y2="656" gradientUnits="userSpaceOnUse">
          <stop offset="0" stopColor="#3e5964" /><stop offset=".45" stopColor="#3e4650" /><stop offset="1" stopColor="#3c3435" />
        </linearGradient>
        <linearGradient id="side" x1="0" y1="340" x2="0" y2="565" gradientUnits="userSpaceOnUse">
          <stop offset="0" stopColor="#585d67" /><stop offset=".16" stopColor="#5f656f" /><stop offset=".45" stopColor="#8592a0" />
          <stop offset=".65" stopColor="#808c9a" /><stop offset=".88" stopColor="#5c616c" /><stop offset="1" stopColor="#585d67" />
        </linearGradient>
      </defs>
      <path d="M429 320.500L986 308l12.500 335.500L442 656z" fill="url(#front)" />
      <path d="M557 318l9-12 12 335-8 12z" fill="url(#strip)" />
      <path d="M435 470l7-12 558-13-8 12.500z" fill="#3d4751" />
      <g fill="none">
        {STEPS.map((s) => (
          <path key={s} d={SPINE} stroke="url(#side)" strokeWidth="20" transform={`translate(${(-8.500 * s) / 12} ${(11.200 * s) / 12})`} />
        ))}
        <path d={OUTER} stroke="#77754f" strokeWidth=".7" transform="translate(-8.500 11.200)" />
        <path d={INNER} stroke="#f09a2c" strokeWidth="1.400" transform="translate(-8.500 11.200)" />
        <path d={SPINE} stroke="#9eabbb" strokeWidth="20" />
        <g stroke="#f6f61f" strokeWidth="1.300" strokeLinejoin="round">
          <path d="M429 320.500L986 308l12.500 335.500L442 656z" />
          <path d="M557 318l9-12 12 335-8 12z" />
          <path d="M435 470l7-12 558-13-8 12.500z" />
        </g>
      </g>
      <g fill="#ffff00" className="font-['Open_Sans',sans-serif] text-[17px] font-light">
        <text x="428" y="320">FRONT</text>
        <text x="577" y="642">RIGHT</text>
        <text x="992" y="457">TOP</text>
      </g>
    </svg>
  );
}

function Viewport() {
  return (
    <main className="relative min-w-0 flex-1 bg-gradient-to-b from-[#005e9f] via-[#003767] to-[#00112f]">
      <Model />
      <div className="absolute inset-x-0 top-[7px] flex justify-center">
        <div className="flex h-8 items-center border border-[#7d8687] bg-[#eef1f2] px-0.5">
          {VIEW_TOOLS.map((n) => (
            <button key={n} aria-label={n} className={n === 'bendview' ? 'flex h-6 w-[26px] items-center justify-center border-2 border-[#8c9192] bg-[#c9cbcc]' : 'flex h-6 w-[26px] items-center justify-center'}>
              <Icon name={n} />
            </button>
          ))}
        </div>
      </div>
      <pre className="absolute right-[44px] bottom-0.5 text-center font-['Liberation_Mono',monospace] text-[13px] leading-[16px] text-[#686c73]">{'X.X+-0.1\nX.XX+-0.01\nX.XXX+-0.001\nANG.+-0.5'}</pre>
      <div className="absolute right-[163px] bottom-0 flex h-[41px] w-[42px] items-center justify-center border border-b-0 border-[#51555a] bg-[#2e333d]">
        <svg viewBox="0 0 16 16" className="size-[15px]" aria-hidden="true"><path d="M1 10v4h4M11 2h4v3" stroke="#ddd" fill="none" /><path d="M6 13V4h4q3 2.500 0 5H6" stroke="#eee" fill="none" strokeWidth="1.200" /></svg>
      </div>
    </main>
  );
}

function Watermark() {
  return (
    <div className="pointer-events-none absolute right-5 bottom-2 w-[168px] font-['Noto_Sans_CJK_SC',sans-serif]">
      <div className="relative text-[42px] leading-[46px] font-light whitespace-nowrap text-black italic">
        <span className="text-[#ff6432]">野火</span>论坛
        <svg viewBox="0 0 20 44" className="absolute -top-4 left-[64px] h-11 w-5" aria-hidden="true">
          <path d="M6 0c10 10 15 18 14 27-1 8-7 13-14 16-5 1-8-1-6-3 8-5 11-10 12-17 0-8-2-15-6-23z" fill="#ff6432" />
          <path d="M2 8c8 9 11 17 9 23 1-8-3-15-9-23z" fill="#ff6432" />
        </svg>
      </div>
      <p className="text-center font-['Liberation_Sans',sans-serif] text-lg leading-4 text-[#8b8e90] italic">www.proewildfire.cn</p>
    </div>
  );
}

function Taskbar() {
  return (
    <footer className="flex h-[39px] shrink-0 items-stretch bg-[#434445] text-xs text-white">
      <button aria-label="开始" className="flex w-12 items-center justify-center">
        <svg viewBox="0 0 16 16" className="size-4"><path d="M0 2l7-1v6.500H0zM8 1l8-1v7.500H8zM0 8.500h7V15l-7-1zM8 8.500h8V16l-8-1z" fill="#fff" /></svg>
      </button>
      <button aria-label="Creo" className="ml-[7px] flex w-10 items-center justify-center border-b-2 border-[#76b9ed] pt-0.5">
        <svg viewBox="0 0 24 24" className="size-6"><path d="M.5.5h23v23H.5z" fill="#fff" stroke="#aaa" /><path d="M4 4h16v16H4z" fill="#dcdedf" stroke="#a5a9aa" /><path d="M10 4h10v11H10z" fill="#0fa0e2" stroke="#075073" /><path d="M4 20V4h4v12h12v4z" fill="#cfd2d3" /></svg>
      </button>
      <button aria-label="Edge" className="ml-[9px] flex w-10 items-center justify-center border-b-2 border-[#76b9ed] pt-0.5">
        <svg viewBox="0 0 24 24" className="size-6">
          <defs><linearGradient id="edge" x1="0" y1="0" x2="1" y2="1"><stop offset="0" stopColor="#2bb4e8" /><stop offset=".5" stopColor="#35c9bb" /><stop offset="1" stopColor="#68d94b" /></linearGradient></defs>
          <circle cx="12" cy="12" r="12" fill="#0f76d0" />
          <path d="M.5 10C2 3.500 7 0 12.500 0 19 0 24 5 24 11c0 4-3 6-6 6-4 0-5-2-4-3 2-3 0-7-5-7-4 0-7 1-8.500 3z" fill="url(#edge)" />
          <path d="M9 12c-2 6 3 11 9 10 2-.5 4-2 5-4-5 3-10 1-10-3 0-2 1-3 1-4-1-2-4-2-5 1z" fill="#0a4ba0" />
          <path d="M14 14c-1 2 1 3.500 4 3.500 2 0 4-.5 5.500-2L22 19c-4 2-9 1-9-3z" fill="#434445" />
        </svg>
      </button>
      <div className="ml-auto flex items-center">
        <svg viewBox="0 0 12 7" className="h-[7px] w-3" aria-hidden="true"><path d="M1 6l5-5 5 5" stroke="#fff" strokeWidth="1.400" fill="none" /></svg>
        <svg viewBox="0 0 18 14" className="ml-2.5 h-3.5 w-[18px]" aria-hidden="true"><path d="M5 5h11v7H5zM17 7v3M3 0v3M6 0v3M2 3h5v2L5 7M4 7v4" fill="none" stroke="#fff" strokeWidth="1.300" /><path d="M9 7h5v3H9z" fill="#fff" /></svg>
        <svg viewBox="0 0 16 16" className="ml-2 size-4" aria-hidden="true"><path d="M2 14C2 7 7 2 14 2M5 14c0-5 4-9 9-9M8 14c0-3 3-6 6-6" fill="none" stroke="#ddd" strokeWidth="1.300" /><circle cx="12.500" cy="13" r="1.800" fill="#fff" /></svg>
        <svg viewBox="0 0 18 16" className="ml-1.5 h-4 w-[18px]" aria-hidden="true"><path d="M1 6h3l4-4v12l-4-4H1zM10 6q2 2 0 4M12 4q4 4 0 8M14 2q6 6 0 12" fill="none" stroke="#fff" strokeWidth="1.200" /></svg>
        <span className="ml-1 text-base leading-5">英</span>
        <div className="ml-3.5 text-center leading-[19px]">
          <p>0:12</p>
          <p>2025/7/5</p>
        </div>
        <span className="mr-1 ml-3 h-full w-px bg-[#858687]" />
      </div>
    </footer>
  );
}

export default function App() {
  return (
    <div className="relative flex h-screen flex-col overflow-hidden font-['Noto_Sans','Noto_Sans_CJK_SC',sans-serif]">
      <TitleBar />
      <TabBar />
      <Ribbon />
      <div className="flex min-h-0 flex-1">
        <ModelTree />
        <Viewport />
      </div>
      <Taskbar />
      <Watermark />
    </div>
  );
}
